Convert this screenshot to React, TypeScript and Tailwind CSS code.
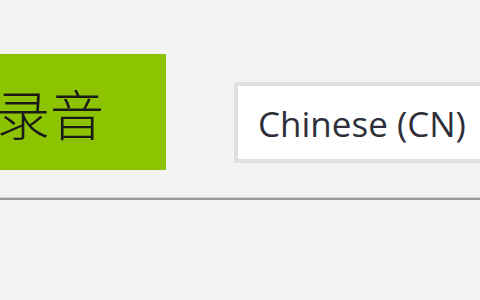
export default function App() {
  return (
    <div className="w-[480px] h-[300px] bg-[#f3f3f3] overflow-hidden relative">
      <div className="flex items-start pt-[54px]">
        <div className="ml-[-20px] w-[186px] h-[116px] bg-[#8cc401] flex items-center pl-[16px] shrink-0">
          <span className="text-[54px] leading-none text-[#1a1a1a] mt-[2px]" style={{ fontFamily: '"Noto Sans CJK SC", sans-serif', fontWeight: 300 }}>录音</span>
        </div>
        <div className="ml-[68px] mt-[28px] w-[300px] h-[81px] border-[4px] border-[#e0e0e0] bg-white flex items-center pl-[20px] shrink-0">
          <span className="text-[35px] text-[#2f2f3a] leading-none whitespace-nowrap mt-[2px]" style={{ fontFamily: '"Open Sans", sans-serif' }}>Chinese (CN)</span>
        </div>
      </div>
      <div className="mt-[27px] h-[1px] bg-[#d4d4d4]" />
      <div className="h-[2px] bg-[#999999]" />
    </div>
  );
}
